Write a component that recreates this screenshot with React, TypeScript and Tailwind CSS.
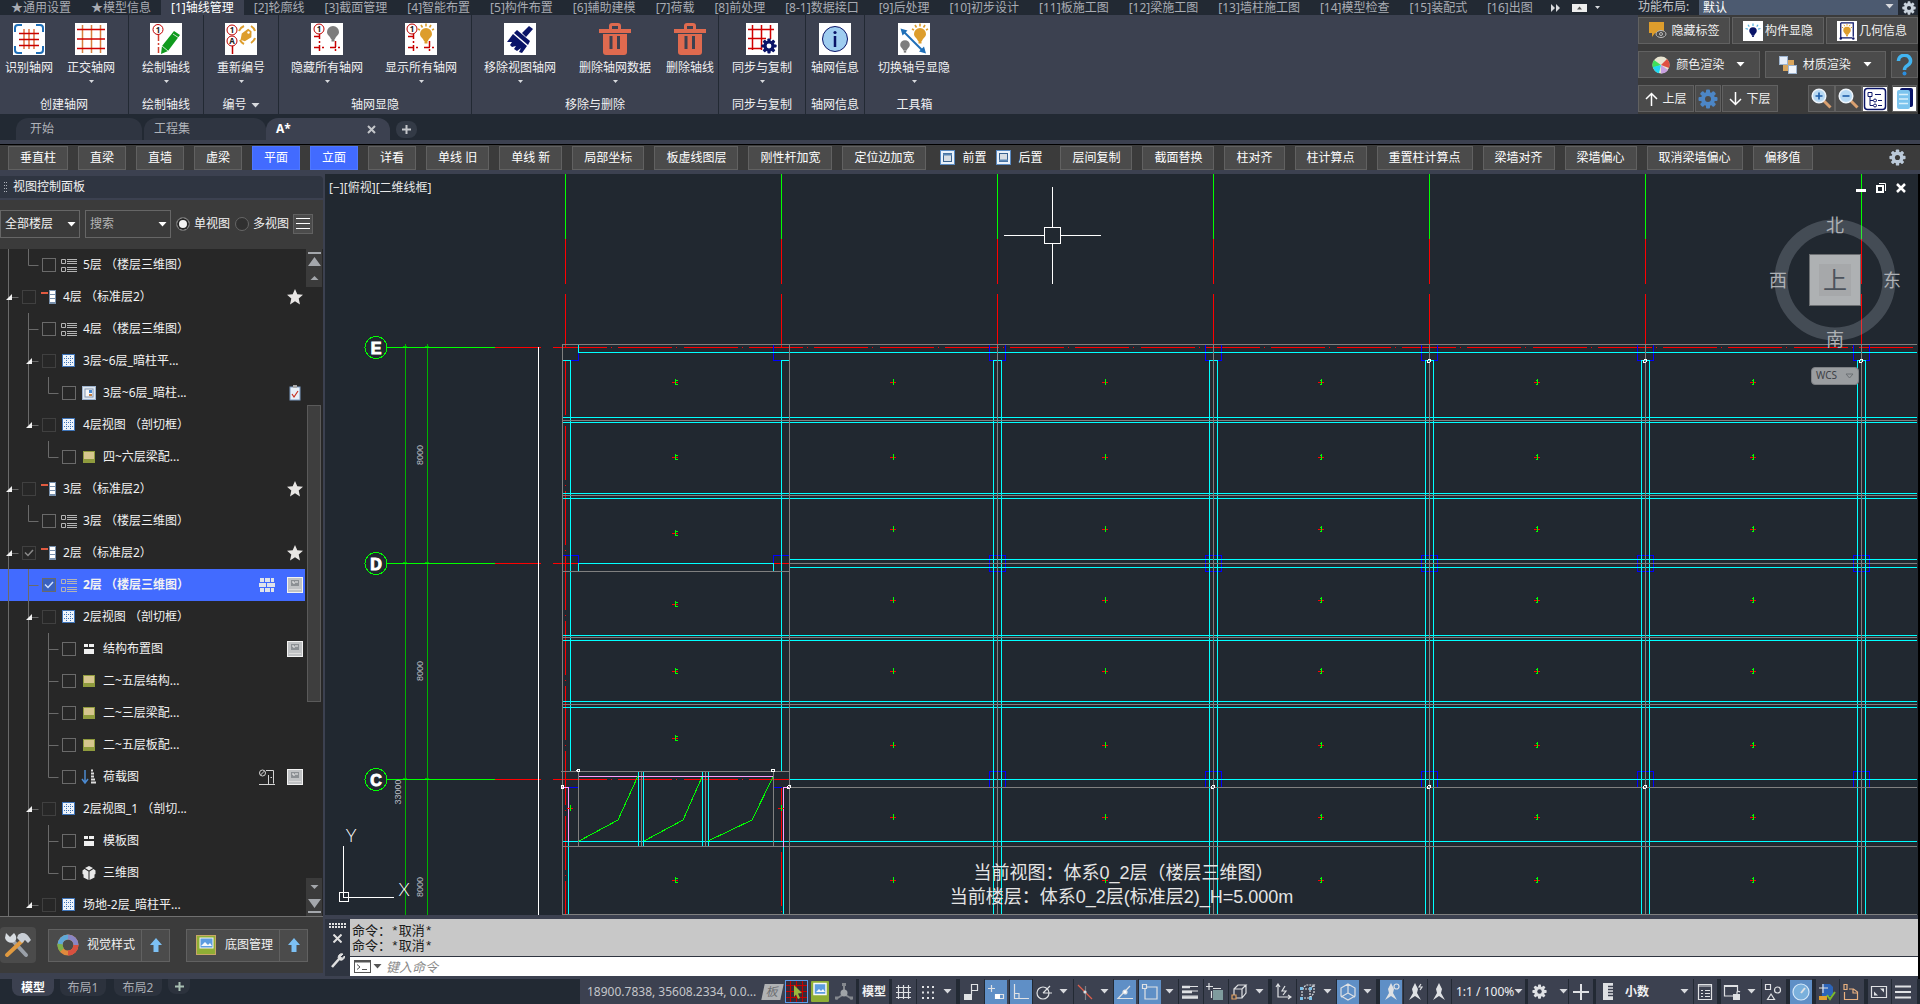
import { useState, type ReactNode } from 'react';
import clsx from 'clsx';

/* ---------- shared bits ---------- */

function Caret({ className = 'text-[#d8dade]' }: { className?: string }) {
  return (
    <svg width="9" height="5" viewBox="0 0 9 5" className={clsx('shrink-0', className)} fill="currentColor">
      <path d="M0.5 0h8L4.5 4.5z" />
    </svg>
  );
}

function SmallCaret() {
  return (
    <svg width="5" height="3" viewBox="0 0 5 3" className="text-[#d8dade]" fill="currentColor">
      <path d="M0 0h5L2.5 3z" />
    </svg>
  );
}

function Gear({ size, color, hole }: { size: number; color: string; hole: string }) {
  return (
    <svg width={size} height={size} viewBox="0 0 20 20">
      <g fill={color}>
        {[0, 45, 90, 135].map((a) => (
          <rect key={a} x="8" y="0.5" width="4" height="19" rx="1" transform={`rotate(${a} 10 10)`} />
        ))}
        <circle cx="10" cy="10" r="7" />
      </g>
      <circle cx="10" cy="10" r="3" fill={hole} />
    </svg>
  );
}

/* ---------- ribbon icons ---------- */

const Paper = ({ children }: { children: ReactNode }) => (
  <svg width="32" height="32" viewBox="0 0 32 32" fill="none">
    <rect width="32" height="32" fill="#fff" />
    {children}
  </svg>
);

const Badge = ({ x, y, label = '1' }: { x: number; y: number; label?: string }) => (
  <g>
    <circle cx={x} cy={y} r="5" stroke="#c00000" fill="#fff" />
    <text x={x} y={y + 3} fontSize="8" fontWeight="700" textAnchor="middle" fill="#222">
      {label}
    </text>
  </g>
);

const Bulb = ({ x, y, color, rays }: { x: number; y: number; color: string; rays?: boolean }) => (
  <g transform={`translate(${x} ${y})`}>
    <path d="M0 -6a6 6 0 0 1 6 6c0 3-3 4-4 7h-4c-1-3-4-4-4-7a6 6 0 0 1 6-6z" fill={color} />
    <rect x="-1.5" y="7" width="3" height="2.5" fill={color} />
    {rays && <path d="M0-10.500v3M-5-9l1.500 2.500M5-9L3.500-6.500M-8-5l2 1M8-5L6-4" stroke={color} strokeWidth="1.600" />}
  </g>
);

const DetectGrid = () => (
  <Paper>
    <path d="M2 9V5a3 3 0 0 1 3-3h4M23 2h4a3 3 0 0 1 3 3v4M30 23v4a3 3 0 0 1-3 3h-4M9 30H5a3 3 0 0 1-3-3v-4" stroke="#1f6fb8" strokeWidth="2" />
    <path d="M11 6v20M16 6v20M21 6v20" stroke="#e07040" strokeWidth="1.500" />
    <path d="M6 10.500h20M6 16.500h20M6 22.500h20" stroke="#c80000" strokeWidth="1.500" />
  </Paper>
);

const OrthoGrid = () => (
  <Paper>
    <path d="M7.500 2v28M16.500 2v28M25.500 2v28" stroke="#d88040" strokeWidth="1.500" />
    <path d="M2 6.500h28M2 16h28M2 25.500h28" stroke="#d00000" strokeWidth="1.500" />
  </Paper>
);

const DrawAxis = () => (
  <Paper>
    <Badge x={8} y={6.5} />
    <path d="M8.500 12v18" stroke="#d04030" strokeWidth="1.500" strokeDasharray="6 2 2 2" />
    <path d="M24 8l6 4L18 28l-7 3 1-8z" fill="#0f9a1e" />
    <path d="M23 11l6 4M12 23l6 5" stroke="#fff" strokeWidth="0.800" />
  </Paper>
);

const Renumber = () => (
  <Paper>
    <path d="M7.500 22v9" stroke="#c00000" strokeWidth="1.500" />
    <Badge x={7} y={7} />
    <Badge x={7} y={18} label="A" />
    <path d="M14 8a9 9 0 0 1 5-5M26 3a9 9 0 0 1 4 5M30 15a9 9 0 0 1-4 5M19 21a9 9 0 0 1-4-4" stroke="#dd9d2c" strokeWidth="2" />
    <path d="M17 10l7-4 3 3-1 6-7 3-4-2z" fill="#dd9d2c" transform="rotate(-8 21 12)" />
    <circle cx="23.500" cy="9.500" r="1.200" fill="#fff" />
  </Paper>
);

const AxisLines = () => (
  <path d="M8.500 10v20M3 13.500h8M3 24.500h10M24.500 18v12M19 24.500h11" stroke="#c80000" strokeWidth="1.500" strokeDasharray="6 2 2 2" />
);

const HideAxis = () => (
  <Paper>
    <AxisLines />
    <Badge x={8} y={6} />
    <Bulb x={22} y={9} color="#7d7d7d" />
  </Paper>
);

const ShowAxis = () => (
  <Paper>
    <AxisLines />
    <Badge x={7} y={6} />
    <Bulb x={21} y={11} color="#dd9d2c" rays />
  </Paper>
);

const Brush = () => (
  <Paper>
    <path d="M25 3l4 3-7 8-4-4z" fill="#0a1468" />
    <path d="M13 7l13 11-2 4L10 10z" fill="#0a1468" />
    <path d="M9 11l14 12-5 7-3-1 2-4-4 3-3-2 2-3-4 1-2-2 2-3-5 0z" fill="#0a1468" />
  </Paper>
);

const Trash = () => (
  <svg width="32" height="32" viewBox="0 0 32 32">
    <path d="M10 6V3a3 3 0 0 1 3-3h6a3 3 0 0 1 3 3v3h10v4H0V6zM13 6h6V3h-6z" fill="#df6a4f" fillRule="evenodd" />
    <path d="M4 11h24v18a3 3 0 0 1-3 3H7a3 3 0 0 1-3-3z" fill="#df6a4f" />
    <path d="M12 13v13M19.500 13v13" stroke="#3c4150" strokeWidth="3" />
  </svg>
);

const SyncCopy = () => (
  <Paper>
    <path d="M6.500 2v25M15.500 2v25M24.500 2v14M2 6.500h26M2 15.500h18M2 25.500h14" stroke="#d00000" strokeWidth="1.500" />
    <g transform="translate(15 15)">
      <Gear size={16} color="#0a1468" hole="#fff" />
    </g>
  </Paper>
);

const AxisInfo = () => (
  <Paper>
    <circle cx="16" cy="16" r="12.500" fill="#9fcdf0" stroke="#0a1468" />
    <path d="M16 13v11" stroke="#0a1468" strokeWidth="2.500" />
    <circle cx="16" cy="9.500" r="1.600" fill="#0a1468" />
  </Paper>
);

const ToggleAxis = () => (
  <Paper>
    <path d="M5 8l20 20" stroke="#1f6fb8" strokeWidth="2" />
    <path d="M2.500 5.500l7 2-5 5zM28 30.500l-7-2 5-5z" fill="#1f6fb8" />
    <Bulb x={22} y={11} color="#dd9d2c" rays />
    <g transform="translate(7 22) scale(0.800)">
      <Bulb x={0} y={0} color="#7d7d7d" />
    </g>
  </Paper>
);

/* ---------- ribbon ---------- */

const menuTabs = [
  '★通用设置', '★模型信息', '[1]轴线管理', '[2]轮廓线', '[3]截面管理', '[4]智能布置', '[5]构件布置', '[6]辅助建模',
  '[7]荷载', '[8]前处理', '[8-1]数据接口', '[9]后处理', '[10]初步设计', '[11]板施工图', '[12]梁施工图', '[13]墙柱施工图',
  '[14]模型检查', '[15]装配式', '[16]出图'
];

function MenuTabs() {
  return (
    <nav className="flex h-[15px] items-stretch overflow-hidden bg-[#222933] pl-px text-[#a9acb3]">
      {menuTabs.map((tab) => (
        <button
          key={tab}
          className={clsx('shrink-0 px-[10px] leading-[11px]', tab.startsWith('[1]') && 'bg-[#3c4150] text-white')}
        >
          {tab}
        </button>
      ))}
      <span className="flex items-center gap-2 pl-2">
        <svg width="9" height="8" viewBox="0 0 9 8" fill="#d8dade">
          <path d="M0 0l4 4-4 4zM5 0l4 4-4 4z" />
        </svg>
        <svg width="15" height="8" viewBox="0 0 15 8" className="ml-1">
          <rect width="15" height="8" fill="#eee" />
          <path d="M5 5.500l2.500-3 2.500 3z" fill="#555" />
        </svg>
        <SmallCaret />
      </span>
    </nav>
  );
}

interface RibbonButton {
  label: string;
  width: string;
  icon: ReactNode;
  menu?: boolean;
}

const ribbonGroups: { title: string; width: string; more?: boolean; buttons: RibbonButton[] }[] = [
  {
    title: '创建轴网',
    width: 'w-[129px]',
    buttons: [
      { label: '识别轴网', width: 'w-[58px]', icon: <DetectGrid /> },
      { label: '正交轴网', width: 'w-[66px]', icon: <OrthoGrid />, menu: true }
    ]
  },
  { title: '绘制轴线', width: 'w-[75px]', buttons: [{ label: '绘制轴线', width: 'w-[74px]', icon: <DrawAxis />, menu: true }] },
  { title: '编号', width: 'w-[75px]', more: true, buttons: [{ label: '重新编号', width: 'w-[74px]', icon: <Renumber />, menu: true }] },
  {
    title: '轴网显隐',
    width: 'w-[193px]',
    buttons: [
      { label: '隐藏所有轴网', width: 'w-[96px]', icon: <HideAxis />, menu: true },
      { label: '显示所有轴网', width: 'w-[92px]', icon: <ShowAxis />, menu: true }
    ]
  },
  {
    title: '移除与删除',
    width: 'w-[247px]',
    buttons: [
      { label: '移除视图轴网', width: 'w-[96px]', icon: <Brush />, menu: true },
      { label: '删除轴网数据', width: 'w-[94px]', icon: <Trash />, menu: true },
      { label: '删除轴线', width: 'w-[56px]', icon: <Trash /> }
    ]
  },
  { title: '同步与复制', width: 'w-[87px]', buttons: [{ label: '同步与复制', width: 'w-[86px]', icon: <SyncCopy />, menu: true }] },
  { title: '轴网信息', width: 'w-[59px]', buttons: [{ label: '轴网信息', width: 'w-[58px]', icon: <AxisInfo /> }] },
  { title: '工具箱', width: 'w-[99px]', buttons: [{ label: '切换轴号显隐', width: 'w-[98px]', icon: <ToggleAxis />, menu: true }] }
];

function Ribbon() {
  return (
    <div className="flex h-[99px] bg-[#3c4150] text-[#f0f0f2]">
      {ribbonGroups.map((group, i) => (
        <section
          key={group.title}
          className={clsx('flex flex-col justify-between pb-px', group.width, i < ribbonGroups.length - 1 && 'border-r border-[#222933]')}
        >
          <div className="flex pt-2">
            {group.buttons.map((b) => (
              <button key={b.label} className={clsx('flex flex-col items-center whitespace-nowrap', b.width)}>
                {b.icon}
                <span className="mt-[5px] leading-4">{b.label}</span>
                <span className="mt-1 h-[3px]">{b.menu && <SmallCaret />}</span>
              </button>
            ))}
          </div>
          <h2 className="flex items-center justify-center gap-1 leading-4">
            {group.title}
            {group.more && <Caret />}
          </h2>
        </section>
      ))}
    </div>
  );
}

const toolButton = 'flex h-[27px] items-center justify-center border border-[#616161] bg-[#4b4b4b] text-[#f0f0f0]';

function QuickPanel() {
  return (
    <aside className="flex h-[114px] w-[280px] shrink-0 flex-col bg-[#3b3b3b]">
      <div className="flex h-[15px] items-stretch bg-[#222933]">
        <label htmlFor="layout" className="w-[61px] shrink-0 leading-[14px] text-[#c4c6ca]">
          功能布局:
        </label>
        <div className="relative flex-1 bg-[#4c5a70]">
          <select id="layout" className="block h-[15px] w-full appearance-none bg-transparent pl-1 leading-[15px] text-white">
            <option>默认</option>
          </select>
          <Caret className="pointer-events-none absolute top-1 right-1 text-[#d8dade]" />
        </div>
        <button aria-label="设置" className="w-5 overflow-hidden pl-1">
          <Gear size={14} color="#c9d2dc" hole="#222933" />
        </button>
      </div>
      <div className="mt-0.5 grid grid-cols-3 gap-0.5">
        <button className={clsx(toolButton, 'gap-1')}>
          <svg width="19" height="17" viewBox="0 0 19 17">
            <path d="M1 0h15v11H7l-3 4v-4H1z" fill="#dd9d2c" />
            <ellipse cx="13" cy="12" rx="5" ry="3.500" fill="#4b4b4b" stroke="#bbb" />
            <circle cx="13" cy="12" r="1.500" fill="none" stroke="#bbb" />
          </svg>
          隐藏标签
        </button>
        <button className={clsx(toolButton, 'gap-0.5')}>
          <svg width="20" height="20" viewBox="0 0 32 32">
            <rect width="32" height="32" fill="#fff" />
            <Bulb x={16} y={16} color="#0a1468" />
            <path d="M16 4v4M8 6l2 3M24 6l-2 3M4 12l4 1M28 12l-4 1" stroke="#58b4e0" strokeWidth="2" />
          </svg>
          构件显隐
        </button>
        <button className={clsx(toolButton, 'gap-0.5')}>
          <svg width="20" height="20" viewBox="0 0 32 32" fill="none">
            <rect width="32" height="32" fill="#fff" />
            <path d="M6 3h20v22M6 3v24h18" stroke="#0a1468" strokeWidth="2" />
            <circle cx="6" cy="28" r="2" fill="#0a1468" />
            <circle cx="26" cy="28" r="2" fill="#0a1468" />
            <Bulb x={16} y={15} color="#dd9d2c" rays />
          </svg>
          几何信息
        </button>
      </div>
      <div className="mt-[7px] flex gap-[5px]">
        <button className={clsx(toolButton, 'flex-1 gap-1.5')}>
          <svg width="18" height="18" viewBox="0 0 18 18">
            <circle cx="9" cy="9" r="8.500" fill="#e8e4d0" />
            <path d="M9 9L2 4a8.500 8.500 0 0 0-1 8z" fill="#3fe05a" />
            <path d="M9 9L1 11a8.500 8.500 0 0 0 6 6.300z" fill="#20d8f0" />
            <path d="M9 9l6-6a8.500 8.500 0 0 1 2 9z" fill="#e05040" />
            <path d="M9 9l7 5a8.500 8.500 0 0 1-7 3.500z" fill="#c8a0e0" />
          </svg>
          颜色渲染
          <Caret className="ml-1.5 text-white" />
        </button>
        <button className={clsx(toolButton, 'flex-1 gap-1.5')}>
          <svg width="18" height="18" viewBox="0 0 18 18">
            <rect x="4" y="4" width="11" height="11" fill="#d9a55c" />
            <rect x="0.500" y="0.500" width="8" height="8" fill="#e6eefa" stroke="#9db4d0" />
            <rect x="9.500" y="9.500" width="8" height="8" fill="#f2f6fc" stroke="#9db4d0" />
          </svg>
          材质渲染
          <Caret className="ml-1.5 text-white" />
        </button>
        <button aria-label="帮助" className={clsx(toolButton, 'w-[27px]')}>
          <svg width="17" height="22" viewBox="0 0 17 22" fill="none">
            <path d="M2.500 7a6 5.500 0 1 1 9 4.500C9 13 8.500 13.500 8.500 16" stroke="#42b4f0" strokeWidth="3.600" />
            <circle cx="8.500" cy="19.500" r="2" fill="#2a8ee0" />
          </svg>
        </button>
      </div>
      <div className="mt-[7px] flex">
        <button className={clsx(toolButton, 'w-14 gap-1')}>
          <svg width="13" height="14" viewBox="0 0 13 14" fill="none" stroke="#fff" strokeWidth="1.500">
            <path d="M6.500 14V1.500M1 7l5.500-5.500L12 7" />
          </svg>
          上层
        </button>
        <button aria-label="楼层设置" className={clsx(toolButton, 'mx-px w-[26px]')}>
          <Gear size={20} color="#4c86c6" hole="#4b4b4b" />
        </button>
        <button className={clsx(toolButton, 'w-14 gap-1')}>
          <svg width="13" height="14" viewBox="0 0 13 14" fill="none" stroke="#fff" strokeWidth="1.500">
            <path d="M6.500 0v12.500M1 7l5.500 5.500L12 7" />
          </svg>
          下层
        </button>
        <div className="ml-auto flex">
          {['放大', '缩小'].map((name) => (
            <button key={name} aria-label={name} className={clsx(toolButton, 'w-[27px]')}>
              <svg width="21" height="21" viewBox="0 0 21 21" fill="none">
                <path d="M13 13l6.500 6.500" stroke="#d9a070" strokeWidth="3" />
                <circle cx="8" cy="8" r="6.800" fill="#b8daf4" stroke="#eef4fa" strokeWidth="1.500" />
                <path d={name === '放大' ? 'M4.500 8h7M8 4.500v7' : 'M4.500 8h7'} stroke="#1c5ca8" strokeWidth="1.600" />
              </svg>
            </button>
          ))}
          <button aria-label="结构树" className={clsx(toolButton, 'w-[26px]')}>
            <svg width="24" height="24" viewBox="0 0 24 24" fill="none" stroke="#0a1468">
              <rect width="24" height="24" fill="#fff" stroke="none" />
              <rect x="1.500" y="1.500" width="21" height="21" rx="3" strokeWidth="1.500" />
              <path d="M5 5.500h4v4H5zM7 10v8.500h3M7 13.500h3M12 7.500h6M15 13.500h4M15 18.500h4" />
              <circle cx="12" cy="13.500" r="1.500" />
              <circle cx="12" cy="18.500" r="1.500" />
            </svg>
          </button>
          <button aria-label="文档" className={clsx(toolButton, 'mx-px ml-1 w-[25px]')}>
            <svg width="23" height="24" viewBox="0 0 23 24">
              <rect width="23" height="24" fill="#fff" />
              <rect x="7" y="1" width="13" height="19" rx="2" fill="#0a1468" />
              <rect x="4" y="3" width="13" height="19" rx="2" fill="#7cc4ee" />
              <path d="M6 7.500h9M6 12h9M6 16.500h9" stroke="#d8f0fc" strokeWidth="1.500" />
            </svg>
          </button>
        </div>
      </div>
    </aside>
  );
}

/* ---------- file tabs and structure toolbar ---------- */

function FileTabs() {
  return (
    <div className="flex h-[26px] items-end bg-[#222933] pl-4 text-[#b0b3b9]">
      <button className="mr-0.5 h-[22px] w-[126px] rounded-t-xl bg-[#2f3541] pl-3.5 text-left">开始</button>
      <button className="h-[22px] w-[122px] rounded-t-xl bg-[#2f3541] pl-2.5 text-left">工程集</button>
      <div className="flex h-[22px] w-[124px] items-center justify-between rounded-t-xl bg-[#3c4150] pr-3.5 pl-2.5">
        <button className="font-bold text-white">A*</button>
        <button aria-label="关闭" className="text-[#c4c6ca]">
          <svg width="9" height="9" viewBox="0 0 9 9" stroke="currentColor" strokeWidth="2">
            <path d="M1 1l7 7M8 1L1 8" />
          </svg>
        </button>
      </div>
      <button aria-label="新建" className="mb-0.5 ml-1.5 flex h-[17px] w-[21px] items-center justify-center rounded-lg bg-[#333a46]">
        <svg width="9" height="9" viewBox="0 0 9 9" stroke="#c4c6ca" strokeWidth="2">
          <path d="M4.500 0v9M0 4.500h9" />
        </svg>
      </button>
    </div>
  );
}

const toolsLeft = ['垂直柱', '直梁', '直墙', '虚梁', '平面', '立面', '详看', '单线 旧', '单线 新', '局部坐标', '板虚线图层', '刚性杆加宽', '定位边加宽'];
const toolsRight = ['层间复制', '截面替换', '柱对齐', '柱计算点', '重置柱计算点', '梁墙对齐', '梁墙偏心', '取消梁墙偏心', '偏移值'];

function ToolbarButton({ label }: { label: string }) {
  const active = label === '平面' || label === '立面';
  return (
    <button
      className={clsx(
        'h-6 shrink-0 border px-[11px] text-white',
        active ? 'border-[#4f78ff] bg-[#426bff]' : 'border-[#616161] bg-[#4b4b4b]'
      )}
    >
      {label}
    </button>
  );
}

function DrawOrder({ label, front }: { label: string; front?: boolean }) {
  return (
    <button className="flex items-center gap-[7px] text-white">
      <svg width="15" height="15" viewBox="0 0 15 15">
        <rect x="0.500" y="0.500" width="14" height="14" fill="#eaf2fb" stroke="#5a8ac0" />
        <rect x="3.500" y="3.500" width="8" height="8" fill="#d8dee4" stroke="#39628f" />
        <path d={front ? 'M3 4.500h9' : 'M3 10.500h9'} stroke="#5a86b4" strokeWidth="2" />
      </svg>
      {label}
    </button>
  );
}

function StructureToolbar() {
  return (
    <div className="border-y-4 border-[#3c4150] bg-[#3b3b3b]">
      <div className="flex h-[26px] items-center gap-2.5 border-t border-black pr-3.5 pl-2">
        {toolsLeft.map((t) => (
          <ToolbarButton key={t} label={t} />
        ))}
        <span className="flex gap-2.5 px-1">
          <DrawOrder label="前置" front />
          <DrawOrder label="后置" />
        </span>
        <span className="-mr-1.5" />
        {toolsRight.map((t) => (
          <ToolbarButton key={t} label={t} />
        ))}
        <button aria-label="工具栏设置" className="ml-auto">
          <Gear size={17} color="#bccada" hole="#3b3b3b" />
        </button>
      </div>
    </div>
  );
}

/* ---------- view tree ---------- */

type Guide = 'pass' | 'tee' | 'end' | 'none';
type Kind = 'list' | 'floor' | 'grid' | 'sheet' | 'image' | 'layout' | 'load' | 'cube';

interface TreeRow {
  label: string;
  kind: Kind;
  guides: Guide[];
  open?: boolean;
  checked?: boolean;
  selected?: boolean;
  marks?: ('star' | 'clip' | 'wall' | 'door' | 'save')[];
}

const treeRows: TreeRow[] = [
  { label: '5层 （楼层三维图）', kind: 'list', guides: ['pass', 'end'] },
  { label: '4层 （标准层2）', kind: 'floor', guides: ['tee'], open: true, marks: ['star'] },
  { label: '4层 （楼层三维图）', kind: 'list', guides: ['pass', 'tee'] },
  { label: '3层~6层_暗柱平...', kind: 'grid', guides: ['pass', 'tee'], open: true },
  { label: '3层~6层_暗柱...', kind: 'sheet', guides: ['pass', 'pass', 'end'], marks: ['clip'] },
  { label: '4层视图 （剖切框）', kind: 'grid', guides: ['pass', 'end'], open: true },
  { label: '四~六层梁配...', kind: 'image', guides: ['pass', 'none', 'end'] },
  { label: '3层 （标准层2）', kind: 'floor', guides: ['tee'], open: true, marks: ['star'] },
  { label: '3层 （楼层三维图）', kind: 'list', guides: ['pass', 'end'] },
  { label: '2层 （标准层2）', kind: 'floor', guides: ['tee'], open: true, checked: true, marks: ['star'] },
  { label: '2层 （楼层三维图）', kind: 'list', guides: ['pass', 'tee'], checked: true, selected: true, marks: ['wall', 'save'] },
  { label: '2层视图 （剖切框）', kind: 'grid', guides: ['pass', 'tee'], open: true },
  { label: '结构布置图', kind: 'layout', guides: ['pass', 'pass', 'tee'], marks: ['save'] },
  { label: '二~五层结构...', kind: 'image', guides: ['pass', 'pass', 'tee'] },
  { label: '二~三层梁配...', kind: 'image', guides: ['pass', 'pass', 'tee'] },
  { label: '二~五层板配...', kind: 'image', guides: ['pass', 'pass', 'tee'] },
  { label: '荷载图', kind: 'load', guides: ['pass', 'pass', 'end'], marks: ['door', 'save'] },
  { label: '2层视图_1 （剖切...', kind: 'grid', guides: ['pass', 'tee'], open: true },
  { label: '模板图', kind: 'layout', guides: ['pass', 'pass', 'tee'] },
  { label: '三维图', kind: 'cube', guides: ['pass', 'pass', 'end'] },
  { label: '场地-2层_暗柱平...', kind: 'grid', guides: ['pass', 'end'], open: true }
];

function GuideCell({ guide, open }: { guide: Guide; open?: boolean }) {
  return (
    <svg width="20" height="32" viewBox="0 0 20 32" className="shrink-0" stroke="#6a6a6a" fill="none">
      {(guide === 'pass' || guide === 'tee') && <path d="M8.500 0v32" />}
      {guide === 'end' && <path d="M8.500 0v16.500" />}
      {(guide === 'tee' || guide === 'end') && <path d="M8.500 16.500h10" />}
      {open && <path d="M12 13v6H6z" fill="#f2f2f2" stroke="none" />}
    </svg>
  );
}

function KindIcon({ kind }: { kind: Kind }) {
  return (
    <svg width="16" height="16" viewBox="0 0 16 16" fill="none" className="shrink-0">
      {kind === 'list' && (
        <g stroke="#b4b4b4">
          <path d="M0.500 2.500h4v4h-4zM0.500 10.500h4v4h-4z" />
          <path d="M6 2.500h10M6 4.500h10M6 6.500h10M6 10.500h10M6 12.500h10M6 14.500h10" />
        </g>
      )}
      {kind === 'floor' && (
        <g>
          <rect y="3" width="7" height="2" fill="#e05a40" />
          <rect x="8" y="1" width="7" height="14" fill="#7890ac" />
          <path d="M9 3.500h5M9 7.500h5M9 11.500h5" stroke="#fff" strokeWidth="3" />
        </g>
      )}
      {kind === 'grid' && (
        <g>
          <rect x="1.500" y="1.500" width="12" height="12" fill="#eef4fb" stroke="#3f74b8" />
          <path d="M5.500 3v10M9.500 3v10M3 5.500h10M3 9.500h10" stroke="#3f74b8" strokeDasharray="1 1" />
        </g>
      )}
      {kind === 'sheet' && (
        <g>
          <rect x="1.500" y="1.500" width="13" height="13" fill="#dfe7f0" stroke="#9fb4cf" />
          <rect x="4" y="4" width="8" height="8" fill="#f6f6f6" stroke="#8296b2" />
          <rect x="8" y="5" width="3" height="3" fill="#4888d0" />
          <rect x="8" y="9" width="3" height="2" fill="#c88040" />
        </g>
      )}
      {kind === 'image' && (
        <g>
          <rect x="2" y="2" width="12" height="12" fill="#8f9b3d" />
          <rect x="3" y="3" width="10" height="7" fill="#d6c68e" />
        </g>
      )}
      {kind === 'layout' && <path d="M3 3h4v3H3zM8 3h5v3H8zM3 8h10v5H3z" fill="#f0f0f0" />}
      {kind === 'load' && (
        <g>
          <path d="M4 1v12M1 10l3 4 3-4" stroke="#4c8ad0" strokeWidth="1.500" />
          <path d="M10 1.500h2M10 4.500h3M10 7.500h3M10 10.500h4M10 13.500h5" stroke="#ddd" strokeWidth="2" />
        </g>
      )}
      {kind === 'cube' && (
        <g fill="#e8e8e8">
          <path d="M8 1l4 2-4 2.500L4 3zM1.500 5.500l2-1.500 4 2.500V15l-5-2.500v-3l-1-.5zM14.500 5.500l-2-1.500-4 2.500V15l5-2.500v-3l1-.5z" />
        </g>
      )}
    </svg>
  );
}

function Mark({ name }: { name: string }) {
  return (
    <svg width="16" height="16" viewBox="0 0 16 16" fill="none" className="shrink-0">
      {name === 'star' && <path d="M8 0l2.300 5.300 5.700.5-4.300 3.800 1.300 5.900-5-3.200-5 3.200 1.300-5.900L0 5.800l5.700-.5z" fill="#e8e6e4" />}
      {name === 'clip' && (
        <g>
          <rect x="3" y="2" width="10" height="13" fill="#e8f0f8" stroke="#7c9cc4" />
          <rect x="6" y="0" width="4" height="3" fill="#aaa" />
          <path d="M5 9l2 3 4-6" stroke="#c83020" strokeWidth="1.200" />
        </g>
      )}
      {name === 'wall' && <path d="M1 1h4v4H1zM6 1h5v4H6zM12 1h3v4h-3zM0 6h7v4H0zM8 6h8v4H8zM1 11h4v4H1zM6 11h5v4H6zM12 11h3v4h-3z" fill="#dfe3ea" />}
      {name === 'door' && (
        <g stroke="#d4d4d4">
          <circle cx="3.500" cy="4" r="3" />
          <path d="M1.500 6l4-4M7 1.500h7.500v13M9.500 6v9M11.500 8.500h1.500M0 15.500h16" />
        </g>
      )}
      {name === 'save' && (
        <g>
          <rect x="0.500" y="0.500" width="15" height="15" fill="#c0c2c4" stroke="#f2f2f2" />
          <rect x="4" y="3" width="8" height="6" fill="#8c9094" />
          <path d="M5 5h2v2M8 5h3" stroke="#f0f0f0" />
          <path d="M2 12.500h12" stroke="#dcdcdc" />
        </g>
      )}
    </svg>
  );
}

function TreeItem({ row, index }: { row: TreeRow; index: number }) {
  const last = row.guides.length - 1;
  const id = `view-${index}`;
  return (
    <li className={clsx('flex h-8 items-center pr-0.5', row.selected && 'bg-[#426bff] font-bold')}>
      {row.guides.map((g, i) => (
        <GuideCell key={i} guide={g} open={i === last && row.open} />
      ))}
      <input
        id={id}
        type="checkbox"
        defaultChecked={row.checked}
        className={clsx(
          'peer ml-0.5 h-3.5 w-3.5 shrink-0 appearance-none border',
          row.open ? 'border-[#404040]' : 'border-[#6a6a6a]',
          row.selected && 'bg-[#3a62c0]'
        )}
      />
      <svg
        width="10"
        height="8"
        viewBox="0 0 10 8"
        fill="none"
        stroke={row.selected ? '#d0e0ff' : '#8a8a8a'}
        strokeWidth="1.500"
        className="pointer-events-none invisible -ml-3 shrink-0 peer-checked:visible"
      >
        <path d="M1 3.500l3 3L9 1" />
      </svg>
      <span className="ml-[7px]">
        <KindIcon kind={row.kind} />
      </span>
      <label htmlFor={id} className="ml-1.5 whitespace-nowrap text-[#f2f2f2]">
        {row.label}
      </label>
      <span className="ml-auto flex gap-3">
        {row.marks?.map((m) => (
          <Mark key={m} name={m} />
        ))}
      </span>
    </li>
  );
}

function SplitButton({ label, icon }: { label: string; icon: ReactNode }) {
  return (
    <div className="flex h-[33px] w-[122px] border border-[#616161] bg-[#4b4b4b]">
      <button className="flex flex-1 items-center gap-2 pl-2 text-[#f2f2f2]">
        {icon}
        {label}
      </button>
      <button aria-label={`${label}选项`} className="flex w-7 items-center justify-center border-l border-[#616161]">
        <svg width="12" height="14" viewBox="0 0 12 14">
          <path d="M6 0l6 7H8.500v7h-5V7H0z" fill="#7cc0f4" />
        </svg>
      </button>
    </div>
  );
}

function ViewPanel() {
  const [mode, setMode] = useState('单视图');
  return (
    <aside className="flex w-[323px] shrink-0 flex-col bg-[#3c4150] pt-0.5">
      <h2 className="mb-0.5 flex h-[22px] shrink-0 items-center gap-1.5 rounded-tr bg-[#2f3541] pl-1 text-[#f2f2f2]">
        <svg width="3" height="10" viewBox="0 0 3 10" fill="#b0b4bc">
          <path d="M0 0h1v1H0zM2 0h1v1H2zM0 3h1v1H0zM2 3h1v1H2zM0 6h1v1H0zM2 6h1v1H2zM0 9h1v1H0zM2 9h1v1H2z" />
        </svg>
        视图控制面板
      </h2>
      <div className="flex h-[49px] shrink-0 items-center bg-[#3b3b3b] pb-0.5 text-[#f2f2f2]">
        <div className="relative w-20">
          <select aria-label="楼层" className="h-7 w-full appearance-none border border-[#666] bg-[#3b3b3b] pl-1">
            <option>全部楼层</option>
          </select>
          <Caret className="pointer-events-none absolute top-3 right-1 text-white" />
        </div>
        <div className="relative ml-[5px] w-[86px]">
          <input aria-label="搜索" placeholder="搜索" className="h-7 w-full border border-[#666] pl-1 placeholder:text-[#b4b4b4]" />
          <Caret className="pointer-events-none absolute top-3 right-1 text-white" />
        </div>
        {['单视图', '多视图'].map((m) => (
          <label key={m} className="ml-[5px] flex items-center gap-1 whitespace-nowrap">
            <input
              type="radio"
              name="mode"
              checked={mode === m}
              onChange={() => setMode(m)}
              className="h-3.5 w-3.5 appearance-none rounded-full border border-[#666] bg-[#303030] checked:bg-[#f4f4f4] checked:shadow-[inset_0_0_0_2px_#262626]"
            />
            {m}
          </label>
        ))}
        <button aria-label="菜单" className="ml-1 flex h-5 w-5 flex-col justify-center gap-1 border border-[#616161] bg-[#4b4b4b] px-0.5">
          <span className="h-px bg-white" />
          <span className="h-px bg-white" />
          <span className="h-px bg-white" />
        </button>
      </div>
      <div className="flex min-h-0 flex-1 bg-[#272727] pr-px">
        <ul className="min-w-0 flex-1 overflow-hidden">
          {treeRows.map((row, i) => (
            <TreeItem key={i} row={row} index={i} />
          ))}
        </ul>
        <div className="ml-px flex w-4 flex-col items-center bg-[#272727]">
          <div className="flex h-[38px] w-4 flex-col items-center bg-[#3b3b3b] pt-[3px]">
            <svg width="13" height="30" viewBox="0 0 13 30" fill="#a4a7ac">
              <path d="M0 0h13v2H0zM6.500 5l6.500 9H0zM6.500 24l4 4h-8z" />
            </svg>
          </div>
          <div className="flex-[118]" />
          <div className="w-3.5 flex-[296] border border-[#5a5a5a] bg-[#3e3e3e]" />
          <div className="flex-[177]" />
          <div className="flex h-[38px] w-4 flex-col items-center bg-[#3b3b3b] pt-[5px]">
            <svg width="13" height="30" viewBox="0 0 13 30" fill="#a4a7ac">
              <path d="M2.500 2h8l-4 4zM0 16h13l-6.500 9zM0 28h13v2H0z" />
            </svg>
          </div>
        </div>
      </div>
      <div className="flex h-[57px] shrink-0 items-center border-t border-[#707070] bg-[#3b3b3b]">
        <button aria-label="工具" className="flex h-9 w-9 items-center justify-center rounded bg-[#4b4b4b]">
          <svg width="28" height="26" viewBox="0 0 28 26" fill="none" strokeLinecap="round">
            <path d="M10 10l12 13" stroke="#9aa0a8" strokeWidth="4" />
            <path d="M2 1l4 4 4-4c3 3 3 7 0 9s-8 0-9-4z" fill="#d8dde2" />
            <path d="M3 23L18 9" stroke="#e09a40" strokeWidth="4" />
            <path d="M14 3c5-4 9-1 11 2l2 3-3 3-3-3-3 3-5-5z" fill="#c8ced6" />
          </svg>
        </button>
        <span className="ml-3">
          <SplitButton
            label="视觉样式"
            icon={
              <svg width="22" height="22" viewBox="0 0 22 22" fill="none" strokeWidth="5" className="shrink-0">
                <circle cx="11" cy="11" r="8" stroke="#e08a3c" />
                <path d="M3 11a8 8 0 0 1 8-8" stroke="#5fa8d8" />
                <path d="M11 3a8 8 0 0 1 8 8" stroke="#8a86c4" />
                <path d="M19 11a8 8 0 0 1-8 8" stroke="#d85040" />
                <path d="M5 16a8 8 0 0 1-2-6" stroke="#7cb04c" />
              </svg>
            }
          />
        </span>
        <span className="ml-4">
          <SplitButton
            label="底图管理"
            icon={
              <svg width="22" height="22" viewBox="0 0 22 22" className="shrink-0">
                <rect x="1.500" y="1.500" width="19" height="19" fill="#8fae35" stroke="#c9a668" />
                <rect x="5" y="4" width="13" height="10" fill="#5c9ce0" stroke="#f4f4f4" />
                <path d="M6 12l4-4 3 3 2-2 2 3z" fill="#f4f8fc" />
              </svg>
            }
          />
        </span>
      </div>
      <div className="h-1.5 shrink-0" />
    </aside>
  );
}

/* ---------- drawing ---------- */

const CYAN = '#00ffff';
const GREY = '#808080';
const RED = '#ff0000';
const GREEN = '#00ff00';
const BLUE = '#0000ff';
const PINK = '#ff9fff';

const axisX = [565.5, 781.5, 997.5, 1213.5, 1429.5, 1645.5, 1861.5];
const columnX = axisX.slice(2);
const axisRows = [
  { name: 'E', y: 347.5 },
  { name: 'D', y: 563.5 },
  { name: 'C', y: 779.5 }
];
// [upper face, centre line, lower face]
const beams = [
  [417.5, 420.5, 422.5],
  [493.5, 495.5, 498.5],
  [635.5, 637.5, 640.5],
  [701.5, 704.5, 707.5]
];
const firstBayMarks = [382, 457, 533, 604, 671, 738, 880];
const bayMarks = [382, 457, 529, 600, 671, 745, 817, 880];
// tick is the side the short bars of the slab mark point to
const bays = [
  { x: 893, tick: 0 },
  { x: 1105, tick: 0 },
  { x: 1321, tick: -2 },
  { x: 1537, tick: -2 },
  { x: 1753, tick: -2 }
];

function Centre({ x, y, tick }: { x: number; y: number; tick: number }) {
  return (
    <g>
      <path d={`M${x - 3} ${y + 0.5}h6`} stroke={RED} />
      <path d={`M${x + 0.5} ${y - 3}v6`} stroke={GREEN} />
      {tick !== 0 && <path d={`M${x + 0.5} ${y - 1.5}h${tick}M${x + 0.5} ${y + 2.5}h${tick}`} stroke={GREEN} />}
    </g>
  );
}

function Node({ x, y }: { x: number; y: number }) {
  return <circle cx={x} cy={y} r="1.500" stroke="#fff" />;
}

function FloorPlan() {
  return (
    <svg className="block h-full w-full" fill="none" strokeWidth="1" shapeRendering="crispEdges">
      <g transform="translate(-325 -174)">
        {axisX.map((x) => (
          <g key={x}>
            <path d={`M${x} 174v65`} stroke={GREEN} />
            <path d={`M${x} 239v45M${x} 294v54`} stroke={RED} />
          </g>
        ))}
        <path d="M405.500 344v571M427.500 344v571" stroke="#00b400" />
        {axisRows.map(({ name, y }) => (
          <g key={name}>
            <path d={`M387 ${y}h108`} stroke={GREEN} />
            <path d={`M403 ${y - 1}h4M425 ${y - 1}h4`} stroke="#00b400" />
            <path d={`M495 ${y}h46`} stroke={RED} />
            <circle cx="376" cy={y} r="11" stroke={GREEN} />
            <text x="376" y={y + 6} fontSize="16" fontWeight="700" textAnchor="middle" fill="#fff" stroke="#fff" className="font-['Liberation_Sans',sans-serif]">
              {name}
            </text>
          </g>
        ))}
        <path d="M553 347.500h1364M553 563.500h25M773 563.500h16M553 779.500h236" stroke={RED} strokeDasharray="54 4 1 6.300" />
        <path d="M565.500 361v554" stroke={RED} strokeDasharray="54 5 1 5" />
        <path d="M781.500 787v128" stroke={RED} strokeDasharray="54 5 1 5" />
        <path d="M538.500 347v568" stroke="#fff" />

        <path d="M571 360.500h7.500v-8M773.500 345v15.500h8M562 555.500h16.500v8M773.500 563v-7.500H789M569 787.500h9M774 787.500h8" stroke={BLUE} />
        {columnX.map((x) => (
          <g key={x} stroke={BLUE}>
            <path d={`M${x - 8} 345v15.500h16V345`} />
            <path d={`M${x - 8} 555.500h16v16h-16z`} />
            <path d={`M${x - 8} 787v-15.500h16V787`} />
          </g>
        ))}

        {/* cyan beam faces */}
        <g stroke={CYAN}>
          <path d="M578.500 345v7.500H1917M562 360.500h8.500v411M789 360.500h-7.500v411" />
          <path d="M578.500 571v-7.500h195v7.500M789 559.500h1128M789 567.500h1128M789 779.500h1128M562 841.500h1355" />
          {beams.map(([top, , bottom]) => (
            <path key={top} d={`M562 ${top}h1355M562 ${bottom}h1355`} />
          ))}
          {columnX.map((x) => (
            <path key={x} d={`M${x - 4} 915V360.500h8V915`} />
          ))}
          <path d="M568.500 841v74M783.500 846v69" />
          <path d="M638.500 772v74M643.500 772v74M702.500 772v74M708.500 772v74" />
        </g>

        {/* slab edges and centre lines */}
        <g stroke={GREY}>
          <path d="M562.500 915V344.500H1917M789.500 344v571" />
          <path d="M562 571.500h227M789 563.500h1128M561 771.500h228M789 787.500h1128M562 846.500h1355M562 914.500h1355" />
          <path d="M578.500 771v76M773.500 771v76M641.500 772v74M705.500 772v74" />
          {beams.map(([, mid]) => (
            <path key={mid} d={`M562 ${mid}h1355`} />
          ))}
          {columnX.map((x) => (
            <path key={x} d={`M${x} 345v570`} />
          ))}
        </g>

        <path d="M579 776.500h194M562 787.500h6.500v54M789 787.500h-5.500v59" stroke={PINK} />
        <path d="M579 841l39-21 20-44M644 841l39-21 19-43M708 841l44-21 21-43" stroke={GREEN} />
        <Node x={578.5} y={770.5} />
        <Node x={773} y={770.5} />
        <Node x={562.5} y={787} />
        <Node x={789} y={787} />
        {axisX.slice(4).map((x) => (
          <Node key={x} x={x - 0.5} y={361} />
        ))}
        {[1213, 1429, 1645].map((x) => (
          <Node key={x} x={x} y={787} />
        ))}

        {firstBayMarks.map((y) => (
          <Centre key={y} x={675} y={y} tick={2} />
        ))}
        {bays.map(({ x, tick }) => bayMarks.map((y) => <Centre key={`${x}-${y}`} x={x} y={y} tick={tick} />))}
        <Centre x={570} y={808} tick={0} />
        <Centre x={781} y={808} tick={0} />

        {/* dimension values */}
        <g fill="#b8bcc2" fontSize="9" textAnchor="middle" className="font-['Liberation_Sans_Narrow','Liberation_Sans',sans-serif]">
          {[455, 671, 887].map((y) => (
            <text key={y} transform={`translate(423 ${y}) rotate(-90)`}>
              8000
            </text>
          ))}
          <text transform="translate(401 792) rotate(-90)">33000</text>
        </g>

        {/* UCS marker */}
        <path d="M339.500 892.500h9v9h-9zM343.500 846v51.500H394" stroke="#fff" />
        <g fill="#fff" fontSize="18" fontWeight="300" textAnchor="middle" className="font-['Lato',sans-serif]">
          <text x="351" y="842">Y</text>
          <text x="404" y="896">X</text>
        </g>

        {/* crosshair */}
        <path d="M1044.500 227.500h16v16h-16zM1004 235.500h40M1061 235.500h40M1052.500 187v40M1052.500 244v40" stroke="#fff" />
      </g>
    </svg>
  );
}

function ViewCube() {
  return (
    <div className="absolute top-[38px] right-[15px] grid h-[136px] w-[136px] grid-cols-3 grid-rows-3 place-items-center text-lg leading-none text-[#aeb1b5]">
      <svg className="absolute inset-0" width="136" height="136" viewBox="0 0 136 136" fill="none">
        <circle cx="68" cy="68" r="54" stroke="#b0b8c4" strokeOpacity="0.250" strokeWidth="13" />
      </svg>
      <button className="relative col-start-2 row-start-1 self-start pt-1">北</button>
      <button className="relative col-start-1 row-start-2 justify-self-start pl-0.5">西</button>
      <button className="relative col-start-2 row-start-2 flex h-[52px] w-[52px] items-center justify-center border border-[#6c6f72] bg-[#aeb1b3]">
        <span className="flex h-8 w-8 items-center justify-center bg-[#a6a8aa] text-2xl text-[#4c535c]">上</span>
      </button>
      <button className="relative col-start-3 row-start-2 justify-self-end pr-0.5">东</button>
      <button className="relative col-start-2 row-start-3 self-end">南</button>
    </div>
  );
}

function Canvas() {
  return (
    <main className="relative min-h-0 flex-1 overflow-hidden bg-[#212830]">
      <FloorPlan />
      <p className="absolute top-1 left-1 leading-5 text-[#e8e8e8]">[−][俯视][二维线框]</p>
      <div className="absolute top-2 right-3 flex gap-2.5 text-white">
        <button aria-label="最小化">
          <svg width="10" height="12" viewBox="0 0 10 12">
            <rect y="7" width="10" height="3" fill="currentColor" />
          </svg>
        </button>
        <button aria-label="还原">
          <svg width="10" height="12" viewBox="0 0 10 12" fill="none" stroke="currentColor">
            <path d="M3 1.500h6.500V9" />
            <rect x="1" y="4" width="6" height="6" strokeWidth="2" />
          </svg>
        </button>
        <button aria-label="关闭视口">
          <svg width="10" height="12" viewBox="0 0 10 12" stroke="currentColor" strokeWidth="2.500">
            <path d="M1 2l8 8M9 2l-8 8" />
          </svg>
        </button>
      </div>
      <ViewCube />
      <button className="absolute top-[193px] right-[59px] flex h-[18px] w-12 items-center justify-between rounded border border-[#7c7f83] bg-[#9a9da0] px-1 text-[10px] text-[#3c4046]">
        WCS
        <svg width="9" height="6" viewBox="0 0 9 6" fill="none" stroke="#6c7074">
          <path d="M1 1h7L4.500 5z" />
        </svg>
      </button>
      <div className="absolute inset-x-0 bottom-1.5 text-center font-['Liberation_Sans','Noto_Sans_CJK_SC',sans-serif] text-lg leading-6 text-[#e4e4e4]">
        <p className="pl-1">当前视图：体系0_2层（楼层三维图）</p>
        <p>当前楼层：体系0_2层(标准层2)_H=5.000m</p>
      </div>
    </main>
  );
}

function CommandLine() {
  return (
    <section className="flex h-16 shrink-0 border-t-4 border-b-[3px] border-[#3c4150] bg-[#2e3440]">
      <div className="flex w-[25px] shrink-0 flex-col items-center gap-1.5 pt-1 text-[#e0e0e0]">
        <svg width="17" height="5" viewBox="0 0 17 5" stroke="currentColor" strokeWidth="2" strokeDasharray="2 1">
          <path d="M0 1h17M0 4h17" />
        </svg>
        <button aria-label="关闭命令行">
          <svg width="9" height="9" viewBox="0 0 9 9" stroke="currentColor" strokeWidth="2">
            <path d="M0.500 0.500l8 8M8.500 0.500l-8 8" />
          </svg>
        </button>
        <button aria-label="自定义" className="pt-1">
          <svg width="14" height="15" viewBox="0 0 14 15" fill="none" stroke="currentColor">
            <path d="M1 14l7-8" strokeWidth="2.500" />
            <path d="M12 1L9.500 3.500l1.500 2L13.500 3A3.500 3.500 0 0 1 8 6.500 3.500 3.500 0 0 1 12 1z" fill="currentColor" />
          </svg>
        </button>
      </div>
      <div className="flex min-w-0 flex-1 flex-col text-[13px]">
        <div className="h-[37px] bg-[#c8c8c8] pt-[5px] pl-0.5 font-['Liberation_Mono','Noto_Sans_CJK_SC',monospace] leading-[15px] text-[#1a1a1a]">
          <p>命令：*取消*</p>
          <p>命令：*取消*</p>
        </div>
        <div className="mt-px flex flex-1 items-center bg-white pl-1">
          <svg width="17" height="13" viewBox="0 0 17 13" fill="none" stroke="#555">
            <rect x="0.500" y="0.500" width="16" height="12" />
            <path d="M0 1.500h17" strokeWidth="2" />
            <path d="M3 4.500l3 2.500-3 2.500M8 9.500h5" />
          </svg>
          <Caret className="ml-0.5 text-[#555]" />
          <input aria-label="命令" placeholder="键入命令" className="ml-1 h-[18px] flex-1 text-black italic outline-none placeholder:text-[#8a8a8a]" />
        </div>
      </div>
    </section>
  );
}

/* ---------- status bar ---------- */

const Glyph = ({ children }: { children: ReactNode }) => (
  <svg width="18" height="18" viewBox="0 0 18 18" fill="none" stroke="#dfe1e4" strokeWidth="1.200" className="shrink-0">
    {children}
  </svg>
);

const BoxGlyph = () => <path d="M3 6h8v9H3zM3 6l4-4h8l-4 4M15 2v8l-4 5" />;
const PersonGlyph = () => <path d="M9 0l3 6-1 4 4 7-6-4-6 4 4-7-1-4z" fill="#dfe1e4" stroke="none" />;

interface StatusItem {
  name: string;
  width: string;
  icon: ReactNode;
  on?: boolean;
  menu?: boolean;
  gap?: boolean;
}

const statusItems: StatusItem[] = [
  { name: '栅格', width: 'w-[25px]', icon: <Glyph><path d="M4.500 2v14M9.500 2v14M14.500 2v14M2 4.500h15M2 9.500h15M2 14.500h15" /></Glyph> },
  { name: '捕捉', width: 'w-[43px]', menu: true, gap: true, icon: <Glyph><path d="M3 4h14M3 9.500h14M3 15h14" strokeDasharray="2 3" strokeWidth="2" /></Glyph> },
  { name: '推断约束', width: 'w-[25px]', icon: <Glyph><path d="M9.500 1.500h6v6h-6zM9.500 7v5" /><path d="M2 11h8v6H2z" fill="#dfe1e4" stroke="none" /></Glyph> },
  { name: '动态输入', width: 'w-[25px]', on: true, icon: <Glyph><path d="M1 5.500h7M4.500 2v7" /><path d="M8.500 11.500h8v4h-8z" /><path d="M8 11h5v5H8z" fill="#fff" stroke="none" /></Glyph> },
  { name: '正交', width: 'w-[23px]', on: true, icon: <Glyph><path d="M2.500 1v14.500H17M2 10.500h5V16" /></Glyph> },
  { name: '极轴', width: 'w-[41px]', menu: true, icon: <Glyph><circle cx="8" cy="10" r="6" /><path d="M8 10l7-7M8 10h9" /></Glyph> },
  { name: '等轴测', width: 'w-10', menu: true, icon: <Glyph><path d="M2 2l14 14" stroke="#e0604c" /><path d="M9.500 3v14" stroke="#7c8088" /><circle cx="9" cy="9" r="1" fill="#fff" /></Glyph> },
  { name: '追踪', width: 'w-[25px]', on: true, icon: <Glyph><path d="M17 15.500H2L14 3" /><circle cx="9" cy="9" r="2" fill="#fff" /></Glyph> },
  { name: '对象捕捉', width: 'w-10', on: true, menu: true, icon: <Glyph><path d="M4 4h12v12H4z" /><path d="M1.500 1.500h4v4h-4z" fill="#5f8fc6" /></Glyph> },
  { name: '线宽', width: 'w-[25px]', icon: <Glyph><path d="M1 3.500h16M1 8h16M1 13h16" /><path d="M1 4h8M1 9h10M1 14.500h16" strokeWidth="2.500" /></Glyph> },
  { name: '透明度', width: 'w-[25px]', icon: <Glyph><path d="M3 0v7M0 3.500h7M5.500 8v7M7 5.500h8" /><path d="M7 7h10v10H7z" fill="#7f9c9e" stroke="none" /></Glyph> },
  { name: '选择循环', width: 'w-[43px]', menu: true, gap: true, icon: <Glyph><BoxGlyph /><path d="M1 12h4v4H1z" stroke="#e0a060" fill="#3c4150" /></Glyph> },
  { name: '动态 UCS', width: 'w-[25px]', icon: <Glyph><path d="M4 1v13h12M2 4l2-3 2 3M14 12l3 2-3 2M11 3L8 8h4l-3 4" /></Glyph> },
  { name: '选择过滤', width: 'w-10', menu: true, icon: <Glyph><g strokeDasharray="2 1"><BoxGlyph /></g><path d="M1 4h3v3H1zM1 14h3v3H1zM10 14h3v3h-3zM10 4h3v3h-3z" fill="#7cc0e8" stroke="none" /></Glyph> },
  { name: '小控件', width: 'w-[43px]', on: true, menu: true, gap: true, icon: <Glyph><path d="M9 1l7 4v8l-7 4-7-4V5zM9 1v9l-7 4M9 10l7 4" /></Glyph> },
  { name: '注释可见', width: 'w-6', on: true, icon: <Glyph><PersonGlyph /><circle cx="14.500" cy="3.500" r="2.500" /></Glyph> },
  { name: '自动缩放', width: 'w-6', icon: <Glyph><PersonGlyph /><path d="M15 1l-2 3h3l-2 3" /></Glyph> },
  { name: '注释比例', width: 'w-6', icon: <Glyph><PersonGlyph /></Glyph> }
];

function StatusButton({ item }: { item: StatusItem }) {
  return (
    <button
      aria-label={item.name}
      className={clsx('flex h-[25px] shrink-0 items-center border-[#222933] bg-[#3c4150]', item.width, item.gap ? 'border-r-4' : 'border-r')}
    >
      <span className={clsx('flex h-6 w-[22px] items-center justify-center', item.on && 'bg-[#5f8fc6]')}>{item.icon}</span>
      {item.menu && <Caret className="ml-1 text-[#d8dade]" />}
    </button>
  );
}

const tailItems: StatusItem[] = [
  { name: '快捷特性', width: 'w-[27px]', gap: true, icon: <Glyph><path d="M2.500 1.500h13v15h-13zM2 3h14M5 7.500h2M9 7.500h5M5 10.500h2M9 10.500h5M5 13.500h2M9 13.500h5" /></Glyph> },
  { name: '锁定界面', width: 'w-[41px]', menu: true, icon: <Glyph><path d="M10 13H1.500V2.500h13V8M1 3.500h14" /><path d="M10 11h7v6h-7z" fill="#dfe1e4" stroke="none" /><path d="M14 11V9a2 2 0 0 1 3 0" /></Glyph> },
  { name: '隔离对象', width: 'w-7', gap: true, icon: <Glyph><path d="M1.500 1.500h5v5h-5zM7 11l3.500 5.500h-7z" /><circle cx="13.500" cy="7" r="3" /></Glyph> },
  { name: '硬件加速', width: 'w-[26px]', on: true, gap: true, icon: <Glyph><circle cx="9" cy="9" r="8" stroke="#d4e8fa" fill="#7ab0dc" /><path d="M9 10l4-5" strokeWidth="2" /></Glyph> },
  { name: '图形校验', width: 'w-6', icon: <Glyph><path d="M4 1h8l3 3v9H4z" fill="#2c64b8" stroke="none" /><path d="M1 13h8v4H1z" fill="#e0a030" stroke="none" /><path d="M1 5h9M5 1v9" /><path d="M9 12l3 4 5-7" stroke="#7cb82c" strokeWidth="2" /></Glyph> },
  { name: '外部参照', width: 'w-7', gap: true, icon: <Glyph><path d="M2 1.500h3v5H2zM2.500 9v7.500h13V9l-4-3H7M11 6v4h4" stroke="#e8b080" /></Glyph> },
  { name: '全屏', width: 'w-6', icon: <Glyph><path d="M1.500 3.500h15v11h-15z" /><path d="M14 5.500v4l-4-4zM4 12.500v-4l4 4z" fill="#dfe1e4" stroke="none" /></Glyph> },
  { name: '自定义状态栏', width: 'w-[26px]', icon: <Glyph><path d="M1 3.500h16M1 9h16M1 14.500h16" strokeWidth="2" /></Glyph> }
];

function LayoutTabs() {
  return (
    <div className="flex w-[580px] shrink-0 items-start pl-3 text-[#a9acb3]">
      <button className="h-[17px] w-[42px] rounded-b-lg bg-[#3c4150] font-bold text-white">模型</button>
      <button className="ml-1.5 h-[17px] w-[46px] rounded-b-lg bg-[#2c323d]">布局1</button>
      <button className="ml-2 h-[17px] w-12 rounded-b-lg bg-[#2c323d]">布局2</button>
      <button aria-label="新建布局" className="ml-1.5 flex h-[15px] w-[22px] items-center justify-center rounded-b-lg bg-[#2c323d]">
        <svg width="9" height="9" viewBox="0 0 9 9" stroke="#a9c0b4" strokeWidth="2">
          <path d="M4.500 0v9M0 4.500h9" />
        </svg>
      </button>
    </div>
  );
}

function StatusBar() {
  return (
    <footer className="flex h-[25px] shrink-0 items-stretch overflow-hidden bg-[#222933] pr-0.5 leading-4">
      <LayoutTabs />
      <div className="flex min-w-0 flex-1 bg-[#3c4150] text-[#f0f0f2]">
        <span className="flex w-[181px] shrink-0 items-center pl-[7px] whitespace-nowrap text-[#c4c6ca]">18900.7838, 35608.2334, 0.0...</span>
        <button className="flex w-6 shrink-0 items-center pl-0.5">
          <span className="flex h-4 w-[19px] -skew-x-12 items-center justify-center bg-[#b0b2b4] text-[#6c6e72]">板</span>
        </button>
        <button aria-label="网格选择" className="flex shrink-0 items-center">
          <svg width="23" height="23" viewBox="0 0 23 23">
            <rect x="0.500" y="0.500" width="22" height="22" fill="#3a2a38" stroke="#5a9cec" />
            <path d="M5.500 1v21M11.500 1v21M17.500 1v21M1 5.500h21M1 11.500h21M1 17.500h21" stroke="#c80000" />
            <path d="M9 5l8 8-4 .5 2 4.500-2 1-2-4.500-2 2.500z" fill="#9cb83c" />
          </svg>
        </button>
        <button aria-label="图像" className="mx-[3px] flex shrink-0 items-center">
          <svg width="18" height="21" viewBox="0 0 18 21">
            <rect width="18" height="21" rx="1" fill="#8fae35" />
            <rect x="3" y="2.500" width="12" height="11" fill="#5c9ce0" stroke="#f8f8f8" strokeWidth="1.500" />
            <path d="M5 11l3-3 2 2 2-2 2 3z" fill="#f4f8fc" />
          </svg>
        </button>
        <button aria-label="三向" className="flex w-6 shrink-0 items-center pl-0.5">
          <svg width="20" height="18" viewBox="0 0 20 18" fill="none" stroke="#84888e" strokeWidth="2">
            <path d="M10 2v9M10 11l-8 5M10 11l8 5" />
            <circle cx="10" cy="10" r="3.500" fill="#a0a4a8" stroke="none" />
            <path d="M8 1.500h4M1 15h3M16 15h3" strokeWidth="3" />
          </svg>
        </button>
        <button className="w-9 shrink-0 border-x-[3px] border-[#222933] font-bold">模型</button>
        {statusItems.map((item) => (
          <StatusButton key={item.name} item={item} />
        ))}
        <button className="flex w-[76px] shrink-0 items-center justify-between border-r-[3px] border-[#222933] pr-1 pl-1 whitespace-nowrap">
          1:1 / 100%
          <Caret />
        </button>
        <button aria-label="切换工作空间" className="flex w-[41px] shrink-0 items-center gap-3 border-r border-[#222933] pl-1">
          <Gear size={15} color="#dfe1e4" hole="#3c4150" />
          <Caret />
        </button>
        <button aria-label="注释监视器" className="flex w-[27px] shrink-0 items-center justify-center border-r-[3px] border-[#222933]">
          <Glyph>
            <path d="M9 1v16M1 9h16" strokeWidth="2" />
          </Glyph>
        </button>
        <div className="relative flex min-w-[60px] flex-1 items-center border-r border-[#222933] pl-[7px]">
          <svg width="10" height="17" viewBox="0 0 10 17" stroke="#3c4150">
            <path d="M0 0h10v17H0z" fill="#dfe1e4" stroke="none" />
            <path d="M5 3.500h5M5 6.500h5M5 9.500h5M5 12.500h5" strokeWidth="1.500" />
          </svg>
          <select aria-label="单位" className="ml-3 flex-1 appearance-none font-bold">
            <option>小数</option>
          </select>
          <Caret className="pointer-events-none absolute top-2.5 right-1 text-[#d8dade]" />
        </div>
        {tailItems.map((item) => (
          <StatusButton key={item.name} item={item} />
        ))}
      </div>
    </footer>
  );
}

export default function App() {
  return (
    <div className="flex h-screen flex-col overflow-hidden bg-[#3c4150] font-['Noto_Sans','Noto_Sans_CJK_SC',sans-serif] text-xs">
      <header className="shrink-0">
        <div className="flex bg-black pr-0.5">
          <div className="min-w-0 flex-1">
            <MenuTabs />
            <Ribbon />
          </div>
          <QuickPanel />
        </div>
        <FileTabs />
        <StructureToolbar />
      </header>
      <div className="flex min-h-0 flex-1">
        <ViewPanel />
        <div className="flex min-w-0 flex-1 flex-col border-r-2 border-r-black pl-0.5">
          <Canvas />
          <CommandLine />
        </div>
      </div>
      <StatusBar />
    </div>
  );
}
